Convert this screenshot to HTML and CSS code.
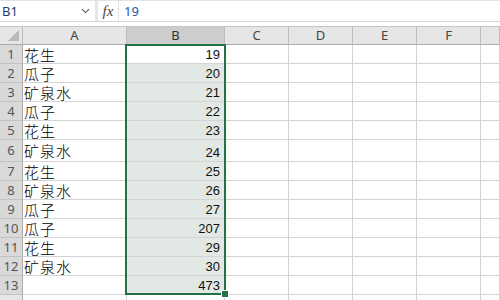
FILE: index.html
```html
<!DOCTYPE html>
<html lang="zh">
<head>
<meta charset="utf-8">
<title>Sheet</title>
<link rel="stylesheet" href="styles.css">
</head>
<body>
<div class="app">
  <div class="fbar">
    <div class="namebox"><span class="nb-text">B1</span><span class="chev"><svg width="9" height="6" viewBox="0 0 9 6"><path d="M1 1.2 L4.5 4.6 L8 1.2" fill="none" stroke="#555" stroke-width="1.1"/></svg></span></div>
    <div class="sep"></div>
    <div class="fx">fx</div>
    <div class="finput">19</div>
  </div>
  <div class="gap"></div>
  <div class="sheet">
    <div class="row hdr">
      <div class="corner"><span class="tri"></span></div>
      <div class="ch">A</div><div class="ch sel">B</div><div class="ch">C</div><div class="ch">D</div><div class="ch">E</div><div class="ch">F</div><div class="ch last"></div>
    </div>
    <div class="row"><div class="rh">1</div><div class="c t">花生</div><div class="c n act">19</div><div class="c"></div><div class="c"></div><div class="c"></div><div class="c"></div><div class="c"></div></div>
    <div class="row"><div class="rh">2</div><div class="c t">瓜子</div><div class="c n s">20</div><div class="c"></div><div class="c"></div><div class="c"></div><div class="c"></div><div class="c"></div></div>
    <div class="row"><div class="rh">3</div><div class="c t">矿泉水</div><div class="c n s">21</div><div class="c"></div><div class="c"></div><div class="c"></div><div class="c"></div><div class="c"></div></div>
    <div class="row"><div class="rh">4</div><div class="c t">瓜子</div><div class="c n s">22</div><div class="c"></div><div class="c"></div><div class="c"></div><div class="c"></div><div class="c"></div></div>
    <div class="row"><div class="rh">5</div><div class="c t">花生</div><div class="c n s">23</div><div class="c"></div><div class="c"></div><div class="c"></div><div class="c"></div><div class="c"></div></div>
    <div class="row tall"><div class="rh">6</div><div class="c t">矿泉水</div><div class="c n s">24</div><div class="c"></div><div class="c"></div><div class="c"></div><div class="c"></div><div class="c"></div></div>
    <div class="row"><div class="rh">7</div><div class="c t">花生</div><div class="c n s">25</div><div class="c"></div><div class="c"></div><div class="c"></div><div class="c"></div><div class="c"></div></div>
    <div class="row"><div class="rh">8</div><div class="c t">矿泉水</div><div class="c n s">26</div><div class="c"></div><div class="c"></div><div class="c"></div><div class="c"></div><div class="c"></div></div>
    <div class="row"><div class="rh">9</div><div class="c t">瓜子</div><div class="c n s">27</div><div class="c"></div><div class="c"></div><div class="c"></div><div class="c"></div><div class="c"></div></div>
    <div class="row"><div class="rh">10</div><div class="c t">瓜子</div><div class="c n s">207</div><div class="c"></div><div class="c"></div><div class="c"></div><div class="c"></div><div class="c"></div></div>
    <div class="row"><div class="rh">11</div><div class="c t">花生</div><div class="c n s">29</div><div class="c"></div><div class="c"></div><div class="c"></div><div class="c"></div><div class="c"></div></div>
    <div class="row"><div class="rh">12</div><div class="c t">矿泉水</div><div class="c n s">30</div><div class="c"></div><div class="c"></div><div class="c"></div><div class="c"></div><div class="c"></div></div>
    <div class="row"><div class="rh">13</div><div class="c t"></div><div class="c n s">473</div><div class="c"></div><div class="c"></div><div class="c"></div><div class="c"></div><div class="c"></div></div>
    <div class="row"><div class="rh plain"></div><div class="c"></div><div class="c"></div><div class="c"></div><div class="c"></div><div class="c"></div><div class="c"></div><div class="c"></div></div>
    <div class="selection"><span class="handle"></span></div>
  </div>
</div>
</body>
</html>
```

FILE: styles.css
```css
html, body {
  margin: 0;
  padding: 0;
  background: #fff;
  overflow: hidden;
}
.app {
  width: 500px;
  height: 300px;
  overflow: hidden;
  display: flex;
  flex-direction: column;
}
.fbar {
  height: 20px;
  border-top: 1px solid #e3e3e3;
  border-bottom: 1px solid #d4d4d4;
  display: flex;
  align-items: stretch;
  flex: none;
}
.namebox {
  width: 95px;
  display: flex;
  align-items: center;
  justify-content: space-between;
  padding: 0 5px 0 2px;
  box-sizing: border-box;
}
.nb-text {
  font-family: "Noto Sans", sans-serif;
  font-size: 13px;
  color: #1f3f6e;
}
.chev {
  display: flex;
  align-items: center;
}
.sep {
  width: 3px;
  background: #e6e6e6;
}
.fx {
  width: 20px;
  border-right: 1px solid #e3e3e3;
  font-family: "Liberation Serif", serif;
  font-style: italic;
  font-size: 15px;
  color: #444;
  display: flex;
  align-items: center;
  justify-content: center;
}
.finput {
  padding-left: 5px;
  font-family: "Noto Sans", sans-serif;
  font-size: 13px;
  color: #1e56a8;
  display: flex;
  align-items: center;
}
.gap {
  height: 4px;
  flex: none;
}
.sheet {
  position: relative;
  flex: 1;
}
.row {
  display: grid;
  grid-template-columns: 23px 104px 98px 64px 64px 64px 64px 1fr;
  height: 19px;
}
.row.tall {
  height: 22px;
}
.row > div {
  box-sizing: border-box;
  border-right: 1px solid #d4d4d4;
  border-bottom: 1px solid #d4d4d4;
  overflow: hidden;
  white-space: nowrap;
}
.hdr > div {
  background: #e6e6e6;
  border-right: 1px solid #bdbdbd;
  border-bottom: 1px solid #ababab;
  border-top: 1px solid #c6c6c6;
}
.corner {
  position: relative;
}
.tri {
  position: absolute;
  right: 3px;
  bottom: 3px;
  width: 0;
  height: 0;
  border-left: 11px solid transparent;
  border-bottom: 11px solid #b9b9b9;
}
.ch {
  font-family: "Noto Sans", sans-serif;
  font-size: 13px;
  color: #444;
  display: flex;
  align-items: center;
  justify-content: center;
  line-height: 1;
}
.ch.sel {
  background: #cdcdcd !important;
  color: #333;
}
.row > .rh {
  background: #d9d9d9;
  border-right: 1px solid #ababab;
  border-bottom: 1px solid #c2c2c2;
  font-family: "Noto Sans", sans-serif;
  font-size: 13px;
  color: #555;
  display: flex;
  align-items: center;
  justify-content: center;
  line-height: 1;
}
.row > .rh.plain {
  background: #e6e6e6;
}
.c.t {
  font-family: "Noto Sans CJK SC", sans-serif;
  font-weight: 300;
  font-size: 15px;
  letter-spacing: 1px;
  line-height: 1;
  color: #000;
  padding-left: 1px;
  display: flex;
  align-items: center;
}
.c.n {
  font-family: "Liberation Sans", sans-serif;
  font-size: 13px;
  color: #111;
  text-align: right;
  padding-right: 4px;
  display: flex;
  align-items: flex-end;
  justify-content: flex-end;
  padding-bottom: 1px;
}
.c.s {
  background: #e2e8e3;
}
.c.act {
  background: #fff;
}
.selection {
  position: absolute;
  left: 125px;
  top: 18px;
  width: 101px;
  height: 251px;
  box-sizing: border-box;
  border: 2px solid #217346;
  pointer-events: none;
}
.handle {
  position: absolute;
  right: -5px;
  bottom: -5px;
  width: 6px;
  height: 6px;
  background: #217346;
  border: 1px solid #fff;
}
```
